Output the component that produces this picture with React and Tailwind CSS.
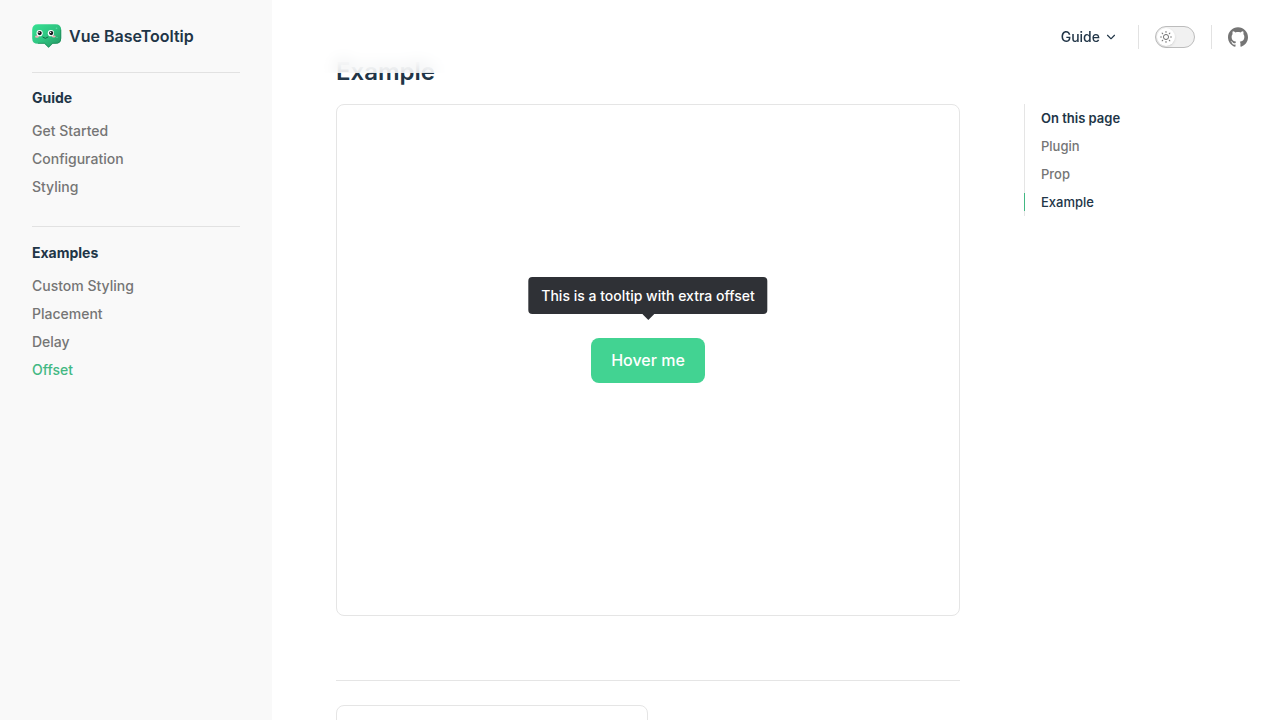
import React from "react";

const groups = [
  { title: "Guide", items: ["Get Started", "Configuration", "Styling"] },
  { title: "Examples", items: ["Custom Styling", "Placement", "Delay", "Offset"] },
];

const outline = ["Plugin", "Prop", "Example"];

function Logo() {
  return (
    <svg viewBox="0 0 30 24" className="h-6 w-[30px]" aria-hidden="true">
      <defs>
        <linearGradient id="bubble" x1="0" y1="0" x2="1" y2="1">
          <stop offset="0" stopColor="#36e293" />
          <stop offset="0.5" stopColor="#2fc481" />
          <stop offset="1" stopColor="#23935f" />
        </linearGradient>
      </defs>
      <path
        d="M6 0.2H23.5Q29.2 0.2 29.2 5.8V14.2Q29.2 19.8 23.5 19.8H20.6L16.6 23.8L12.4 19.8H6Q0.2 19.8 0.2 14.2V5.8Q0.2 0.2 6 0.2Z"
        fill="url(#bubble)"
      />
      <path d="M28.7 5.8V14.2Q28.7 19.3 23.5 19.3H20.4L16.6 23.2L12.6 19.3H6" fill="none" stroke="#1f8556" strokeWidth="0.9" opacity="0.7" />
      <ellipse cx="4.9" cy="12.7" rx="1.9" ry="1.1" fill="#f3a9b4" />
      <ellipse cx="21.8" cy="12.5" rx="1.9" ry="1.1" fill="#f3a9b4" />
      <circle cx="7.6" cy="9.2" r="3.1" fill="#fff" />
      <circle cx="18.9" cy="9.2" r="3.1" fill="#fff" />
      <circle cx="7.7" cy="9.1" r="2.1" fill="#16181c" />
      <circle cx="19.2" cy="9.1" r="2.1" fill="#16181c" />
      <circle cx="7.1" cy="8.4" r="0.6" fill="#fff" />
      <circle cx="18.6" cy="8.4" r="0.6" fill="#fff" />
      <path d="M10.8 13.2Q13.4 15.8 15.9 13.2" fill="none" stroke="#145c40" strokeWidth="0.9" strokeLinecap="round" />
      <circle cx="24.5" cy="4.3" r="0.8" fill="#5fdca6" />
      <circle cx="25" cy="13.3" r="0.6" fill="#5fdca6" />
    </svg>
  );
}

function Sidebar() {
  return (
    <aside className="w-[272px] shrink-0 bg-[#f9f9f9] px-8">
      <a href="#home" className="flex h-[72px] items-center gap-[7px] text-base font-semibold">
        <Logo />
        Vue BaseTooltip
      </a>
      <nav aria-label="Sidebar">
        {groups.map((group) => (
          <section key={group.title} className="border-t border-[#e2e2e2] pt-[10px] pb-[25px] first:pt-[9px]">
            <h2 className="text-sm leading-8 font-bold">{group.title}</h2>
            <ul className="mt-[3px]">
              {group.items.map((item) => (
                <li key={item}>
                  <a
                    href={"#" + item}
                    className={
                      item === "Offset"
                        ? "block text-sm leading-7 font-medium text-[#42b883]"
                        : "block text-sm leading-7 font-medium text-[#757575]"
                    }
                  >
                    {item}
                  </a>
                </li>
              ))}
            </ul>
          </section>
        ))}
      </nav>
    </aside>
  );
}

function SunIcon() {
  return (
    <svg viewBox="0 0 24 24" className="h-3 w-3 fill-[#757575]" aria-hidden="true">
      <path d="M12,18c-3.3,0-6-2.7-6-6s2.7-6,6-6s6,2.7,6,6S15.3,18,12,18zM12,8c-2.2,0-4,1.8-4,4c0,2.2,1.8,4,4,4c2.2,0,4-1.8,4-4C16,9.8,14.2,8,12,8z" />
      <path d="M12,4c-0.6,0-1-0.4-1-1V1c0-0.6,0.4-1,1-1s1,0.4,1,1v2C13,3.6,12.6,4,12,4z" />
      <path d="M12,24c-0.6,0-1-0.4-1-1v-2c0-0.6,0.4-1,1-1s1,0.4,1,1v2C13,23.6,12.6,24,12,24z" />
      <path d="M5.6,6.6c-0.3,0-0.5-0.1-0.7-0.3L3.5,4.9c-0.4-0.4-0.4-1,0-1.4s1-0.4,1.4,0l1.4,1.4c0.4,0.4,0.4,1,0,1.4C6.2,6.5,5.9,6.6,5.6,6.6z" />
      <path d="M19.8,20.8c-0.3,0-0.5-0.1-0.7-0.3l-1.4-1.4c-0.4-0.4-0.4-1,0-1.4s1-0.4,1.4,0l1.4,1.4c0.4,0.4,0.4,1,0,1.4C20.3,20.7,20,20.8,19.8,20.8z" />
      <path d="M3,13H1c-0.6,0-1-0.4-1-1s0.4-1,1-1h2c0.6,0,1,0.4,1,1S3.6,13,3,13z" />
      <path d="M23,13h-2c-0.6,0-1-0.4-1-1s0.4-1,1-1h2c0.6,0,1,0.4,1,1S23.6,13,23,13z" />
      <path d="M4.2,20.8c-0.3,0-0.5-0.1-0.7-0.3c-0.4-0.4-0.4-1,0-1.4l1.4-1.4c0.4-0.4,1-0.4,1.4,0s0.4,1,0,1.4l-1.4,1.4C4.7,20.7,4.5,20.8,4.2,20.8z" />
      <path d="M18.4,6.6c-0.3,0-0.5-0.1-0.7-0.3c-0.4-0.4-0.4-1,0-1.4l1.4-1.4c0.4-0.4,1-0.4,1.4,0s0.4,1,0,1.4l-1.4,1.4C18.9,6.5,18.6,6.6,18.4,6.6z" />
    </svg>
  );
}

function TopBar() {
  return (
    <header className="sticky top-0 z-10 flex h-[73px] shrink-0 items-center justify-end gap-4 bg-white/80 px-8 backdrop-blur-sm">
      <button type="button" className="mr-1 flex items-center gap-1 text-sm font-medium">
        Guide
        <svg viewBox="0 0 24 24" className="h-[14px] w-[14px] fill-current" aria-hidden="true">
          <path d="M12,16c-0.3,0-0.5-0.1-0.7-0.3l-6-6c-0.4-0.4-0.4-1,0-1.4s1-0.4,1.4,0l5.3,5.3l5.3-5.3c0.4-0.4,1-0.4,1.4,0s0.4,1,0,1.4l-6,6C12.5,15.9,12.3,16,12,16z" />
        </svg>
      </button>
      <span className="h-6 w-px bg-[#e2e2e2]" />
      <button
        type="button"
        role="switch"
        aria-checked="false"
        aria-label="Toggle dark mode"
        className="flex h-[22px] w-10 items-center rounded-full border border-[#bcbcbc] bg-[#f1f1f1] px-px"
      >
        <span className="flex h-[18px] w-[18px] items-center justify-center rounded-full bg-white shadow-sm">
          <SunIcon />
        </span>
      </button>
      <span className="h-6 w-px bg-[#e2e2e2]" />
      <a href="#github" aria-label="GitHub">
        <svg viewBox="0 0 24 24" className="h-5 w-5 fill-[#757575]" aria-hidden="true">
          <path d="M12 .297c-6.63 0-12 5.373-12 12 0 5.303 3.438 9.8 8.205 11.385.6.113.82-.258.82-.577 0-.285-.01-1.04-.015-2.04-3.338.724-4.042-1.61-4.042-1.61C4.422 18.07 3.633 17.7 3.633 17.7c-1.087-.744.084-.729.084-.729 1.205.084 1.838 1.236 1.838 1.236 1.07 1.835 2.809 1.305 3.495.998.108-.776.417-1.305.76-1.605-2.665-.3-5.466-1.332-5.466-5.93 0-1.31.465-2.38 1.235-3.22-.135-.303-.54-1.523.105-3.176 0 0 1.005-.322 3.3 1.23.96-.267 1.98-.399 3-.405 1.02.006 2.04.138 3 .405 2.28-1.552 3.285-1.23 3.285-1.23.645 1.653.24 2.873.12 3.176.765.84 1.23 1.91 1.23 3.22 0 4.61-2.805 5.625-5.475 5.92.42.36.81 1.096.81 2.22 0 1.606-.015 2.896-.015 3.286 0 .315.21.69.825.57C20.565 22.092 24 17.592 24 12.297c0-6.627-5.373-12-12-12" />
        </svg>
      </a>
    </header>
  );
}

export default function App() {
  return (
    <div className="flex h-screen overflow-hidden bg-white font-['Inter',sans-serif] text-[#213547] antialiased">
      <Sidebar />
      <div className="flex min-w-0 flex-1 flex-col">
        <TopBar />
        <div className="-mt-[17px] flex gap-16 px-8 pl-16">
          <main className="min-w-0 flex-1">
            <h1 className="text-2xl leading-8 font-semibold">Example</h1>
            <div className="mt-4 flex h-[512px] items-center justify-center rounded-lg border border-[#e5e5e5]">
              <div className="relative">
                <button type="button" aria-describedby="tip" className="h-[45px] rounded-lg bg-[#42d392] px-5 text-base font-medium text-white">
                  Hover me
                </button>
                <div
                  id="tip"
                  role="tooltip"
                  className="absolute bottom-full left-1/2 mb-6 -translate-x-1/2 rounded-[4px] bg-[#2f3136] px-[13px] py-2 text-sm leading-[21px] font-medium whitespace-nowrap text-white"
                >
                  This is a tooltip with extra offset
                  <svg viewBox="0 0 12 6" className="absolute top-full left-1/2 h-[6px] w-3 -translate-x-1/2 fill-[#2f3136]" aria-hidden="true">
                    <path d="M0 0H12L6 6Z" />
                  </svg>
                </div>
              </div>
            </div>
            <footer className="mt-16 grid grid-cols-2 border-t border-[#e5e5e5] pt-6">
              <a href="#delay" aria-label="Previous page" className="h-[70px] rounded-lg border border-[#e5e5e5]" />
            </footer>
          </main>
          <nav aria-labelledby="outline-title" className="mt-12 w-56 shrink-0 self-start border-l border-[#e5e5e5]">
            <h2 id="outline-title" className="pl-4 text-[13px] leading-7 font-semibold">
              On this page
            </h2>
            <ul>
              {outline.map((item) => (
                <li key={item} className="relative">
                  {item === "Example" && <span className="absolute top-[5px] -left-px h-[18px] w-px bg-[#42b883]" />}
                  <a
                    href={"#" + item}
                    className={
                      item === "Example"
                        ? "block pl-4 text-[13px] leading-7 font-medium text-[#213547]"
                        : "block pl-4 text-[13px] leading-7 font-medium text-[#757575]"
                    }
                  >
                    {item}
                  </a>
                </li>
              ))}
            </ul>
          </nav>
        </div>
      </div>
    </div>
  );
}
